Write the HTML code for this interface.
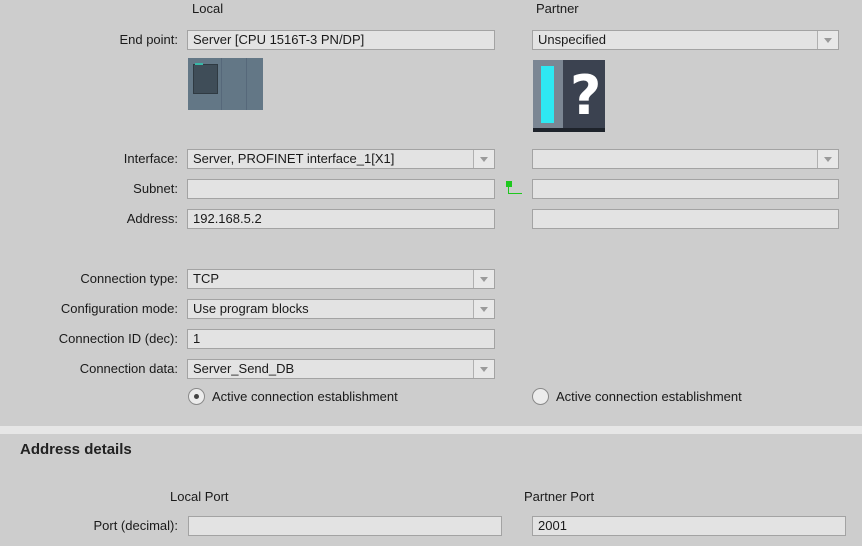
<!DOCTYPE html>
<html><head><meta charset="utf-8"><style>
body{margin:0;width:862px;height:546px;background:#cdcdcd;font-family:"Liberation Sans",sans-serif;font-size:13px;color:#1a1a1a;position:relative;overflow:hidden}
.a{position:absolute}
.l{position:absolute;right:684px;text-align:right;white-space:nowrap;line-height:20px}
.f{position:absolute;height:18px;background:#e3e3e3;border:1px solid #a3a3a3;line-height:18px;padding-left:5px;box-sizing:content-box;white-space:nowrap}
.dd{position:absolute;top:0;right:0;width:20px;height:18px;border-left:1px solid #b0b0b0;background:#e8e8e8}
.dd:after{content:"";position:absolute;left:6px;top:7px;border-left:4px solid transparent;border-right:4px solid transparent;border-top:5px solid #9a9a9a}
.rad{position:absolute;width:15px;height:15px;border:1px solid #8a8a8a;border-radius:50%;background:#ececec}
</style></head><body>
<div class="a" style="left:192px;top:1px">Local</div>
<div class="a" style="left:536px;top:1px">Partner</div>

<div class="l" style="top:30px">End point:</div>
<div class="f" style="left:187px;top:30px;width:301px">Server [CPU 1516T-3 PN/DP]</div>
<div class="f" style="left:532px;top:30px;width:300px">Unspecified<div class="dd"></div></div>

<div class="a" style="left:188px;top:58px;width:75px;height:52px;background:#637786">
 <div class="a" style="left:5px;top:6px;width:23px;height:28px;background:#3f4d58;border:1px solid #2f3a42"></div>
 <div class="a" style="left:7px;top:5px;width:8px;height:2px;background:#38b8a8"></div>
 <div class="a" style="left:33px;top:0;width:1px;height:52px;background:#56687a"></div>
 <div class="a" style="left:58px;top:0;width:1px;height:52px;background:#56687a"></div>
</div>
<div class="a" style="left:533px;top:60px;width:72px;height:72px;background:#3b4250">
 <div class="a" style="left:0;top:0;width:30px;height:68px;background:#7b8693"></div>
 <div class="a" style="left:8px;top:6px;width:13px;height:57px;background:#2ee8f2"></div>
 <div class="a" style="left:0;top:68px;width:72px;height:4px;background:#1e232b"></div>
 <div class="a" style="left:37px;top:0;font-family:'DejaVu Sans',sans-serif;font-size:54px;font-weight:bold;color:#fff;line-height:72px">?</div>
</div>

<div class="l" style="top:149px">Interface:</div>
<div class="f" style="left:187px;top:149px;width:301px">Server, PROFINET interface_1[X1]<div class="dd"></div></div>
<div class="f" style="left:532px;top:149px;width:300px"><div class="dd"></div></div>

<div class="l" style="top:179px">Subnet:</div>
<div class="f" style="left:187px;top:179px;width:301px"></div>
<div class="a" style="left:506px;top:181px;width:6px;height:6px;background:#1ec81e"></div>
<div class="a" style="left:508px;top:187px;width:1px;height:6px;background:#1ec81e"></div>
<div class="a" style="left:508px;top:193px;width:14px;height:1px;background:#1ec81e"></div>
<div class="f" style="left:532px;top:179px;width:300px"></div>

<div class="l" style="top:209px">Address:</div>
<div class="f" style="left:187px;top:209px;width:301px">192.168.5.2</div>
<div class="f" style="left:532px;top:209px;width:300px"></div>

<div class="l" style="top:269px">Connection type:</div>
<div class="f" style="left:187px;top:269px;width:301px">TCP<div class="dd"></div></div>
<div class="l" style="top:299px">Configuration mode:</div>
<div class="f" style="left:187px;top:299px;width:301px">Use program blocks<div class="dd"></div></div>
<div class="l" style="top:329px">Connection ID (dec):</div>
<div class="f" style="left:187px;top:329px;width:301px">1</div>
<div class="l" style="top:359px">Connection data:</div>
<div class="f" style="left:187px;top:359px;width:301px">Server_Send_DB<div class="dd"></div></div>

<div class="rad" style="left:188px;top:388px"><div class="a" style="left:5px;top:5px;width:5px;height:5px;border-radius:50%;background:#444"></div></div>
<div class="a" style="left:212px;top:389px">Active connection establishment</div>
<div class="rad" style="left:532px;top:388px"></div>
<div class="a" style="left:556px;top:389px">Active connection establishment</div>

<div class="a" style="left:0;top:426px;width:862px;height:8px;background:#e6e6e6"></div>
<div class="a" style="left:20px;top:441px;font-size:15px;font-weight:bold;color:#222">Address details</div>
<div class="a" style="left:170px;top:489px">Local Port</div>
<div class="a" style="left:524px;top:489px">Partner Port</div>
<div class="l" style="top:516px;right:684px">Port (decimal):</div>
<div class="f" style="left:188px;top:516px;width:307px"></div>
<div class="f" style="left:532px;top:516px;width:307px">2001</div>
</body></html>
